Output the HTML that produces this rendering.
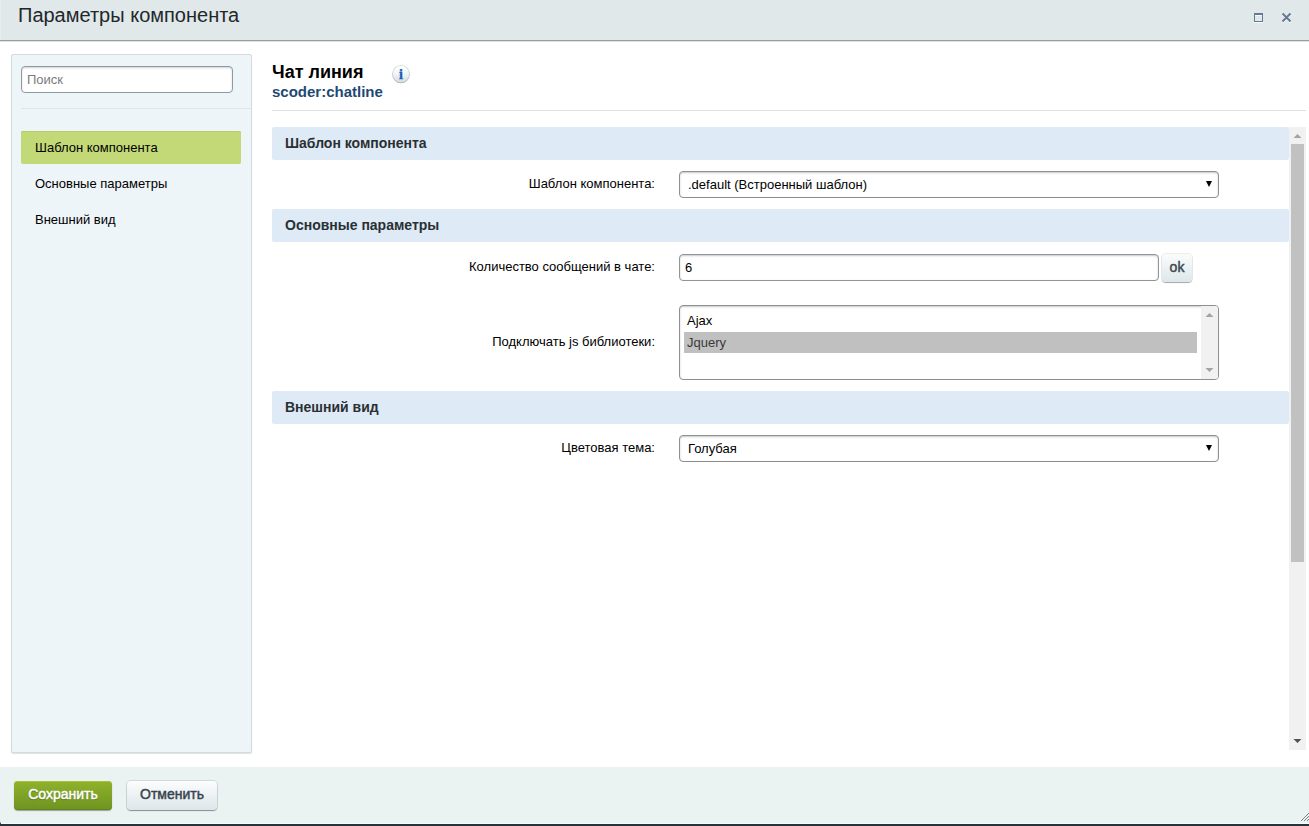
<!DOCTYPE html>
<html lang="ru">
<head>
<meta charset="utf-8">
<title>Параметры компонента</title>
<style>
*{box-sizing:border-box;margin:0;padding:0}
html,body{width:1309px;height:826px;overflow:hidden;background:#fff;font-family:"Liberation Sans",sans-serif;font-size:13px;color:#000}
#wrap{position:relative;width:1309px;height:826px;overflow:hidden;background:#fff}
.abs{position:absolute}
#head{left:0;top:0;width:1309px;height:40px;background:#e0e8ea;border-left:1px solid #e9eff1}
#headline{left:0;top:40px;width:1309px;height:1px;background:#9b9c9d}
#headsh{left:0;top:41px;width:1309px;height:1px;background:#e3e3e3}
#title{left:18px;top:3px;font-size:20px;line-height:24px;color:#22272b;white-space:nowrap}
#side{left:11px;top:54px;width:241px;height:699px;background:#eef5f9;border:1px solid #d3dbde;border-radius:2px;box-shadow:0 1px 1px rgba(0,0,0,.12)}
#search{left:21px;top:66px;width:212px;height:27px;background:#fff;border:1px solid #8e9aa3;border-radius:4px;box-shadow:inset 0 1px 2px rgba(0,0,0,.18)}
#search span{position:absolute;left:5px;top:5px;font-size:13px;line-height:15px;color:#7b7b7b}
#sep{left:21px;top:108px;width:230px;height:1px;background:#dfe6e9}
.mi{left:21px;width:220px;height:33px;font-size:13px;line-height:33px;padding-left:14px;color:#000;white-space:nowrap}
.mi.sel{background:#c3d977;box-shadow:inset 0 1px 0 #b7cd6c;border-radius:2px}
#h1{left:272px;top:62px;font-size:18px;line-height:21px;font-weight:bold;color:#000;white-space:nowrap}
#h2{left:272px;top:83px;font-size:15px;line-height:17px;font-weight:bold;color:#1d4a73;white-space:nowrap}
#hr{left:272px;top:110px;width:1034px;height:1px;background:#dfe2e3}
.sec{left:272px;width:1017px;height:33px;background:#deeaf5;border-radius:2px;font-size:14px;font-weight:bold;line-height:33px;padding-left:13px;color:#2a2f33;white-space:nowrap}
.lbl{left:272px;width:383px;text-align:right;font-size:13px;line-height:16px;color:#000;white-space:nowrap}
.ctl{background:#fff;border:1px solid #8f959a;border-radius:4px;box-shadow:inset 0 1px 2px rgba(0,0,0,.22);font-size:13px;color:#000;white-space:nowrap}
.ctl.nat{border-color:#8f8f8f}
.ctl .t{position:absolute;left:8px;top:5px;line-height:15px}
.arr{position:absolute;right:6px;top:9px;width:0;height:0;border-left:3.5px solid transparent;border-right:3.5px solid transparent;border-top:6px solid #000}
#ok{left:1162px;top:254px;width:30px;height:28px;border-radius:4px;background:linear-gradient(#fbfcfc,#dde7ea);box-shadow:0 1px 1px rgba(0,0,0,.3),0 0 0 1px rgba(0,0,0,.07);font-family:"Liberation Sans",sans-serif;font-size:14px;font-weight:bold;color:#3f4b54;text-align:center;line-height:28px}
#sb{left:1289px;top:127px;width:17px;height:623px;background:#f1f1f1}
#sbt{left:1291px;top:144px;width:13px;height:418px;background:#c1c1c1}
#foot{left:0;top:767px;width:1309px;height:56px;background:#eaf2f2}
#corner{left:0;top:818px;width:4px;height:8px;background:#27323b}
#footw{left:1px;top:823px;width:1308px;height:1px;background:#f7fafa}
#dark{left:0;top:824px;width:1309px;height:2px;background:#27323b}
.btn{height:29px;border-radius:4px;font-family:"Liberation Sans",sans-serif;font-size:14px;font-weight:bold;text-align:center;white-space:nowrap}
.sx{display:inline-block;font-weight:normal;-webkit-text-stroke:0.45px currentColor;position:relative;top:-1px}
#save{left:14px;top:781px;width:98px;background:linear-gradient(#8fb22c,#6f9320);color:#fff;line-height:28px;text-shadow:0 1px 1px rgba(0,0,0,.35);box-shadow:0 1px 1px rgba(0,0,0,.35), inset 0 1px 0 #a6c233, inset 0 -1px 0 #64851a}
#cancel{left:127px;top:781px;width:90px;height:29px;background:linear-gradient(#fcfdfd,#dce6e9);color:#36424c;line-height:28px;box-shadow:0 1px 1px rgba(0,0,0,.35),0 0 0 1px rgba(0,0,0,.1)}
</style>
</head>
<body>
<div id="wrap">
  <div id="head" class="abs"></div>
  <div id="title" class="abs">Параметры компонента</div>
  <svg class="abs" style="left:1253px;top:12px;filter:drop-shadow(0 1px 0 rgba(255,255,255,.75))" width="12" height="12" viewBox="0 0 12 12"><rect x="1.5" y="2" width="8" height="7.5" fill="none" stroke="#647993" stroke-width="1"/><rect x="1" y="1" width="9" height="2" fill="#647993"/></svg>
  <svg class="abs" style="left:1281px;top:12px;filter:drop-shadow(0 1px 0 rgba(255,255,255,.75))" width="11" height="11" viewBox="0 0 11 11"><path d="M1.5 1.5 L9.5 9.5 M9.5 1.5 L1.5 9.5" stroke="#647993" stroke-width="2" fill="none"/></svg>
  <div id="headline" class="abs"></div>
  <div id="headsh" class="abs"></div>

  <div id="side" class="abs"></div>
  <div id="search" class="abs"><span>Поиск</span></div>
  <div id="sep" class="abs"></div>
  <div class="abs mi sel" style="top:131px">Шаблон компонента</div>
  <div class="abs mi" style="top:167px">Основные параметры</div>
  <div class="abs mi" style="top:203px">Внешний вид</div>

  <div id="h1" class="abs">Чат линия</div>
  <div id="h2" class="abs">scoder:chatline</div>
  <svg class="abs" style="left:390px;top:63px" width="22" height="24" viewBox="0 0 22 24">
    <defs><linearGradient id="ig" x1="0" y1="0" x2="0" y2="1"><stop offset="0" stop-color="#ffffff"/><stop offset="0.5" stop-color="#f1f5f7"/><stop offset="1" stop-color="#d3dee4"/></linearGradient></defs>
    <circle cx="11" cy="11.500" r="8.700" fill="#a9b2b8"/>
    <circle cx="11" cy="10.800" r="8.800" fill="#d3dade"/>
    <circle cx="11" cy="10.800" r="8" fill="url(#ig)"/>
    <text x="11" y="15.600" text-anchor="middle" font-family="Liberation Serif, serif" font-weight="bold" font-size="14" fill="#1b5eb3" stroke="#1b5eb3" stroke-width="0.350">i</text>
  </svg>
  <div id="hr" class="abs"></div>

  <div class="abs sec" style="top:127px">Шаблон компонента</div>
  <div class="abs lbl" style="top:176px">Шаблон компонента:</div>
  <div class="abs ctl nat" style="left:679px;top:171px;width:540px;height:27px"><span class="t">.default (Встроенный шаблон)</span><i class="arr"></i></div>

  <div class="abs sec" style="top:209px">Основные параметры</div>
  <div class="abs lbl" style="top:259px">Количество сообщений в чате:</div>
  <div class="abs ctl" style="left:679px;top:254px;width:480px;height:27px"><span class="t" style="left:5px">6</span></div>
  <div id="ok" class="abs"><span class="sx">ok</span></div>

  <div class="abs lbl" style="top:334px">Подключать js библиотеки:</div>
  <div class="abs ctl nat" style="left:679px;top:305px;width:540px;height:75px;overflow:hidden">
    <span class="t" style="left:7px;top:7px">Ajax</span>
    <div class="abs" style="left:4px;top:26px;width:513px;height:21px;background:#c0c0c0"></div>
    <span class="t" style="left:7px;top:29px;color:#3a3a3a">Jquery</span>
    <div class="abs" style="left:521px;top:0;width:17px;height:73px;background:#f1f1f1"></div>
    <svg class="abs" style="left:521px;top:0" width="17" height="73" viewBox="0 0 17 73"><path d="M4.500 11 L8.500 7 L12.500 11 Z" fill="#a3a3a3"/><path d="M4.500 62 L8.500 66 L12.500 62 Z" fill="#a3a3a3"/></svg>
  </div>

  <div class="abs sec" style="top:391px">Внешний вид</div>
  <div class="abs lbl" style="top:440px">Цветовая тема:</div>
  <div class="abs ctl nat" style="left:679px;top:435px;width:540px;height:27px"><span class="t">Голубая</span><i class="arr"></i></div>

  <div id="sb" class="abs"></div>
  <div id="sbt" class="abs"></div>
  <svg class="abs" style="left:1289px;top:127px" width="17" height="623" viewBox="0 0 17 623"><path d="M4.500 11 L8.500 7 L12.500 11 Z" fill="#a3a3a3"/><path d="M4.500 612 L8.500 616 L12.500 612 Z" fill="#505050"/></svg>

  <div id="corner" class="abs"></div>
  <div id="foot" class="abs" style="border-bottom-left-radius:3px;height:57px"></div>
  <div id="footw" class="abs"></div>
  <div id="dark" class="abs"></div>
  <div id="save" class="abs btn"><span class="sx">Сохранить</span></div>
  <div id="cancel" class="abs btn"><span class="sx">Отменить</span></div>
  <svg class="abs" style="left:1297px;top:809px" width="12" height="13" viewBox="0 0 12 13" shape-rendering="crispEdges" fill="#7b8183"><rect x="4" y="11" width="1" height="1"/><rect x="5" y="10" width="1" height="1"/><rect x="6" y="9" width="1" height="1"/><rect x="7" y="8" width="1" height="1"/><rect x="8" y="7" width="1" height="1"/><rect x="9" y="6" width="1" height="1"/><rect x="10" y="5" width="1" height="1"/><rect x="11" y="4" width="1" height="1"/><rect x="7" y="11" width="1" height="1"/><rect x="8" y="10" width="1" height="1"/><rect x="9" y="9" width="1" height="1"/><rect x="10" y="8" width="1" height="1"/><rect x="11" y="7" width="1" height="1"/><rect x="10" y="11" width="1" height="1"/><rect x="11" y="10" width="1" height="1"/></svg>
</div>
</body>
</html>
